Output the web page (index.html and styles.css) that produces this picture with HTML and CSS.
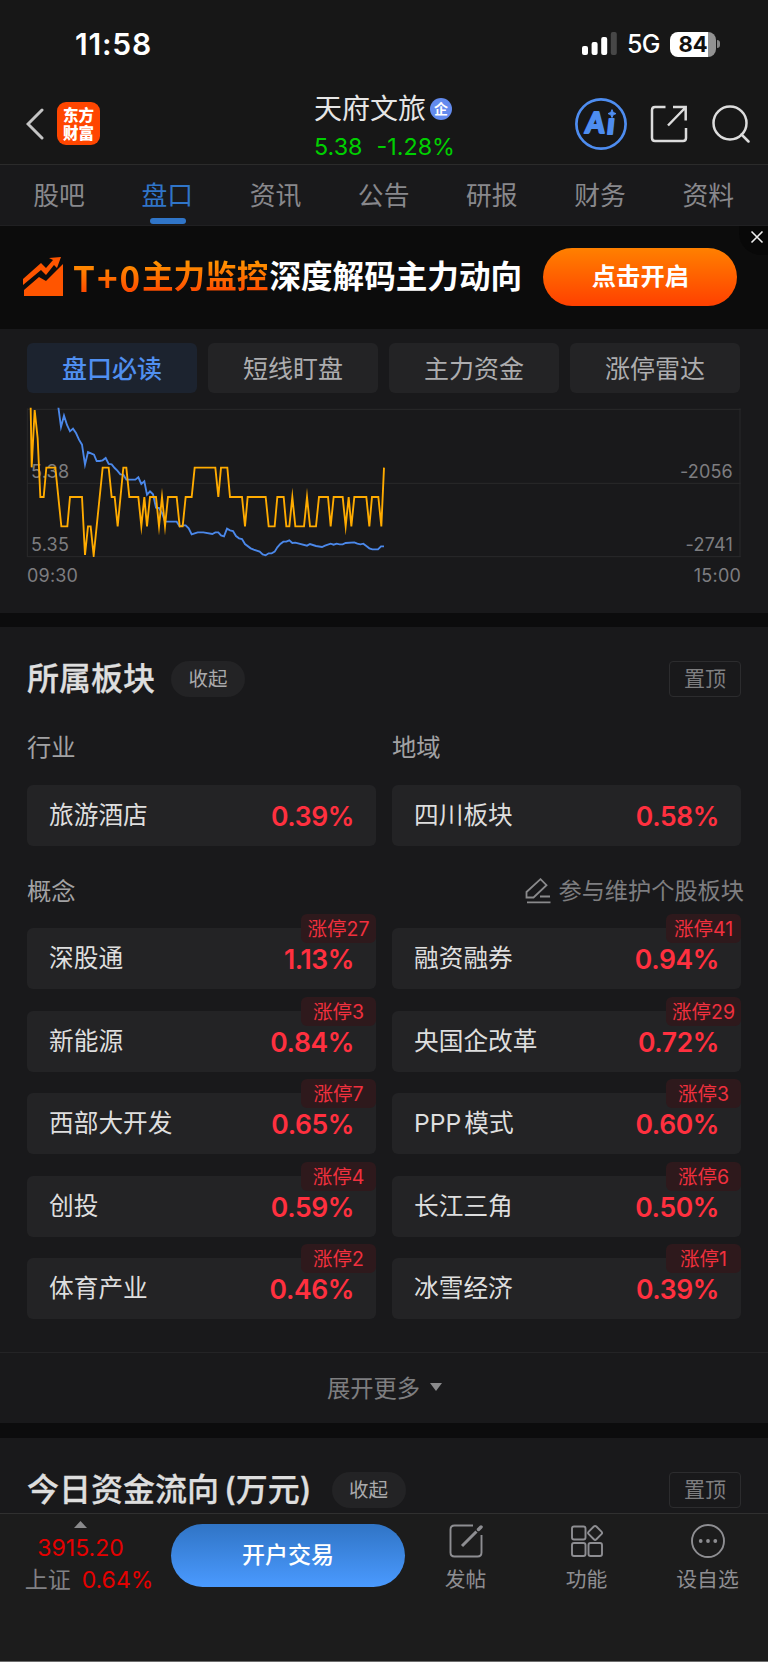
FILE: index.html
```html
<!DOCTYPE html>
<html lang="zh-CN">
<head>
<meta charset="utf-8">
<title>天府文旅</title>
<link rel="stylesheet" href="styles.css">
</head>
<body>
<div class="app">
  <div class="status">
    <span class="time">11:58</span>
    <div class="status-right">
      <svg class="signal" width="36" height="24" viewBox="0 0 36 24"><g fill="#fff"><rect x="0" y="14" width="6" height="9" rx="2"/><rect x="9.6" y="10" width="6" height="13" rx="2"/><rect x="19.2" y="5" width="6" height="18" rx="2"/></g><rect x="28.8" y="0" width="6" height="23" rx="2" fill="#474747"/></svg>
      <span class="net">5G</span>
      <div class="battery"><span>84</span></div>
      <i class="battery-tip"></i>
    </div>
  </div>

  <header class="header">
    <div class="header-left">
      <svg width="18" height="32" viewBox="0 0 18 32"><path d="M16 2 2 16 16 30" fill="none" stroke="#c4c4c4" stroke-width="3" stroke-linecap="round"/></svg>
      <div class="logo">东方<br>财富</div>
    </div>
    <div class="stock">
      <div class="stock-name">天府文旅<span class="corp">企</span></div>
      <div class="stock-quote"><span>5.38</span><span>-1.28%</span></div>
    </div>
    <div class="header-right">
      <svg width="52" height="52" viewBox="0 0 52 52"><circle cx="26" cy="26" r="24.6" fill="none" stroke="#4e8df0" stroke-width="2.7"/><g transform="translate(3.500 0) skewX(-6)"><text class="ai-text" x="10" y="35" textLength="19" lengthAdjust="spacingAndGlyphs">A</text><text class="ai-text" x="31.500" y="36">ı</text></g><path d="M37 11.600l1.200 2.800 2.800 1.200-2.800 1.200-1.200 2.800-1.200-2.800-2.800-1.200 2.800-1.200z" fill="#4e8df0" stroke="#4e8df0" stroke-width="1"/></svg>
      <svg width="38" height="38" viewBox="0 0 38 38" fill="none" stroke="#dcdcdc" stroke-width="2.500"><path d="M15.500 2H5Q2 2 2 5v28q0 3 3 3h28q3 0 3-3V23M23 2h12.700v13.500M35 3 18 20.500"/></svg>
      <svg width="38" height="38" viewBox="0 0 38 38" fill="none" stroke="#dcdcdc" stroke-width="2.500" stroke-linecap="round"><circle cx="18" cy="18" r="16.500"/><path d="m29.500 29.500 7 7"/></svg>
    </div>
  </header>

  <nav class="tabs">
    <a>股吧</a><a class="on">盘口</a><a>资讯</a><a>公告</a><a>研报</a><a>财务</a><a>资料</a>
  </nav>

  <div class="banner">
    <svg class="banner-icon" width="41" height="40" viewBox="0 0 41 40" fill="#ff5500"><path d="M0 22 18 6l5 5 7-8-4-2L38 0l-4 11-3-3-8 10-5-5L0 28z"/><path d="M1 39V33L16 20l7 4L40 7v32z"/></svg>
    <span class="banner-hot"><span class="t0">T+0</span>主力监控</span><span class="banner-text">深度解码主力动向</span>
    <a class="banner-btn">点击开启</a>
    <span class="banner-close"><svg width="14" height="14" viewBox="0 0 14 14"><path d="m1.500 1.500 11 11m0-11-11 11" stroke="#eee" stroke-width="1.600"/></svg></span>
  </div>

  <section class="chart-section">
    <div class="chips"><a class="on">盘口必读</a><a>短线盯盘</a><a>主力资金</a><a>涨停雷达</a></div>
    <div class="chart">
      <svg width="768" height="163" viewBox="0 0 2304 489">
        <g fill="none" stroke="#29292b" stroke-width="3"><path d="M82 43H2222M82 265H2222M82 485H2222M82 40V486M2220 40V486"/></g>
        <g class="axis">
          <text x="93" y="249">5.38</text><text x="93" y="469">5.35</text>
          <text x="2199" y="249" text-anchor="end">-2056</text><text x="2199" y="469" text-anchor="end">-2741</text>
        </g>
        <clipPath id="plot"><rect x="82" y="38" width="2140" height="448"/></clipPath>
        <g fill="none" stroke-width="5.600" stroke-miterlimit="10" clip-path="url(#plot)">
          <polyline stroke="#4b88ea" points="175,36 183,96 192,62 201,90 210,109 219,101 228,114 237,134 246,149 255,209 264,171 273,175 282,179 290,198 299,198 308,196 317,189 326,207 335,208 344,219 352,227 361,238 370,239 379,254 406,254 415,247 424,267 433,259 441,299 450,289 459,298 468,338 477,339 486,354 495,379 504,380 530,380 539,394 548,391 557,391 566,400 575,418 584,415 593,412 610,412 637,417 646,412 655,412 663,421 672,424 681,401 690,406 699,408 708,423 717,430 726,432 735,447 752,460 761,464 779,470 788,478 797,481 806,475 815,475 824,470 832,457 841,447 850,440 859,440 868,436 877,444 886,443 921,452 930,447 948,453 966,456 975,452 992,446 1001,449 1010,446 1019,448 1028,448 1037,444 1063,442 1072,446 1081,448 1090,446 1099,453 1108,460 1117,463 1134,463 1143,454 1152,454"/>
          <polyline stroke="#ffab00" points="92,36 95,217 104,45 113,130 121,306 131,306 139,218 166,218 184,394 202,394 210,306 246,306 255,480 264,394 272,394 281,482 308,218 326,218 335,306 344,306 353,394 370,218 379,218 388,306 415,306 424,394 433,306 441,394 450,306 468,306 477,394 486,306 495,394 504,306 530,306 539,394 548,394 557,306 575,306 584,218 646,218 655,306 663,218 682,218 690,306 726,306 735,394 743,306 797,306 806,394 824,394 832,306 851,306 859,394 868,394 877,306 886,394 912,394 921,306 930,394 948,394 957,306 984,306 992,394 1001,306 1028,306 1037,394 1046,306 1054,394 1063,306 1099,306 1108,394 1116,306 1135,306 1144,394 1152,218"/>
        </g>
      </svg>
      <div class="times"><span>09:30</span><span>15:00</span></div>
    </div>
  </section>

  <section class="plates">
    <div class="title-row"><h2>所属板块</h2><a class="fold">收起</a><a class="pin">置顶</a></div>
    <div class="pair labels"><span>行业</span><span>地域</span></div>
    <div class="pair">
      <div class="card"><span>旅游酒店</span><b>0.39%</b></div>
      <div class="card"><span>四川板块</span><b>0.58%</b></div>
    </div>
    <div class="concept-head"><span>概念</span>
      <a><svg width="26" height="26" viewBox="0 0 26 26" fill="none" stroke="#8a8a8c" stroke-width="1.800"><path d="M1.500 19.500V14L15.500 1.200l6 6L8.500 19.500zM15 18.500h10M2 24.300h23.500"/></svg>参与维护个股板块</a>
    </div>
    <div class="pair concepts">
      <div class="card"><span>深股通</span><b>1.13%</b><em>涨停27</em></div>
      <div class="card"><span>融资融券</span><b>0.94%</b><em>涨停41</em></div>
      <div class="card"><span>新能源</span><b>0.84%</b><em>涨停3</em></div>
      <div class="card"><span>央国企改革</span><b>0.72%</b><em>涨停29</em></div>
      <div class="card"><span>西部大开发</span><b>0.65%</b><em>涨停7</em></div>
      <div class="card"><span><span class="latin">PPP</span>模式</span><b>0.60%</b><em>涨停3</em></div>
      <div class="card"><span>创投</span><b>0.59%</b><em>涨停4</em></div>
      <div class="card"><span>长江三角</span><b>0.50%</b><em>涨停6</em></div>
      <div class="card"><span>体育产业</span><b>0.46%</b><em>涨停2</em></div>
      <div class="card"><span>冰雪经济</span><b>0.39%</b><em>涨停1</em></div>
    </div>
    <div class="more">展开更多<svg width="12" height="8" viewBox="0 0 12 8"><path d="M0 0h12L6 8z" fill="#8a8a8c"/></svg></div>
  </section>

  <section class="flow">
    <div class="title-row"><h2>今日资金流向<span class="paren">(</span>万元<span>)</span></h2><a class="fold">收起</a><a class="pin">置顶</a></div>
  </section>

  <footer class="bottom">
    <div class="index">
      <svg width="13" height="7" viewBox="0 0 13 7"><path d="M0 7h13L6.500 0z" fill="#8a8a8c"/></svg>
      <span class="num">3915.20</span>
      <div class="index-row"><span>上证</span><span class="num">0.64%</span></div>
    </div>
    <a class="trade">开户交易</a>
    <div class="actions">
      <a><svg width="34" height="34" viewBox="0 0 34 34" fill="none" stroke="#8e8e92" stroke-width="1.900"><path d="M24 1.500H5.500q-4 0-4 4v23q0 4 4 4h23q4 0 4-4V11"/><path d="m13 22 14.500-14.500" stroke-width="3"/><path d="m29.500 5.500 2.500-2.500" stroke-width="3.500" stroke-linecap="round"/></svg>发帖</a>
      <a><svg width="34" height="34" viewBox="0 0 34 34" fill="none" stroke="#8e8e92" stroke-width="1.900"><rect x="2" y="2.500" width="13.500" height="13" rx="2"/><rect x="2" y="19" width="13.500" height="13" rx="2"/><rect x="18.500" y="19" width="13.500" height="13" rx="2"/><rect x="19.700" y="3.500" width="10.800" height="10.800" rx="1.800" transform="rotate(45 25.100 8.900)"/></svg>功能</a>
      <a><svg width="34" height="34" viewBox="0 0 34 34"><circle cx="17" cy="17" r="16" fill="none" stroke="#8e8e92" stroke-width="1.900"/><g fill="#8e8e92"><circle cx="9.700" cy="17" r="1.900"/><circle cx="17" cy="17" r="1.900"/><circle cx="24.300" cy="17" r="1.900"/></g></svg>设自选</a>
    </div>
  </footer>
</div>
</body>
</html>
```
FILE: styles.css
```css
* { box-sizing: border-box; }
body {
  margin: 0;
  background: #0c0c0d;
  font-family: Inter, "Noto Sans CJK SC", sans-serif;
  font-weight: 400;
}
.app {
  width: 768px;
  height: 1662px;
  display: flex;
  flex-direction: column;
  overflow: hidden;
}
.app > * { flex: none; }
svg { display: block; flex: none; }

.status {
  height: 84px;
  background: #171717;
  display: flex;
  justify-content: space-between;
  padding: 0 48px 0 75px;
  color: #fff;
}
.time { font-size: 30px; font-weight: 600; line-height: 88px; letter-spacing: 0.8px; }
.status-right { display: flex; align-items: center; height: 88px; }
.net { font-size: 25px; font-weight: 500; margin-left: 9px; width: 43px; letter-spacing: -0.8px; line-height: 90px; }
.battery {
  width: 46px;
  height: 25px;
  border-radius: 8px;
  background: linear-gradient(90deg, #fff 38px, #929292 38px);
  color: #111;
  font-size: 22px;
  font-weight: 700;
  line-height: 25px;
  text-align: center;
}
.battery-tip { width: 3px; height: 8px; margin-left: 1px; border-radius: 0 4px 4px 0; background: #858585; }

.header {
  height: 81px;
  background: #171717;
  border-bottom: 1px solid #2b2b2b;
  display: grid;
  grid-template-columns: 240px 1fr 240px;
}
.header-left { display: flex; align-items: center; padding-left: 26px; gap: 13px; height: 79px; }
.logo {
  width: 43px;
  height: 43px;
  padding-top: 3px;
  border-radius: 9px;
  background: #ff4600;
  color: #fff;
  text-align: center;
  font: 900 15.5px/18px "Noto Sans CJK SC", sans-serif;
}
.stock { text-align: center; }
.stock-name {
  height: 46px;
  padding: 4px 2px 0 0;
  display: flex;
  align-items: center;
  justify-content: center;
  gap: 4px;
  color: #e6e6e6;
  font-size: 28px;
  line-height: 50px;
}
.corp {
  width: 22px;
  height: 22px;
  border-radius: 50%;
  background: #638bee;
  color: #fff;
  font-size: 14px;
  font-weight: 700;
  line-height: 21px;
}
.stock-quote { display: flex; justify-content: center; gap: 14px; color: #00d000; font-size: 23.3px; line-height: 34px; padding-left: 1px; }
.header-right { display: flex; align-items: center; height: 80px; padding-left: 47px; gap: 23px; }
.header-right svg:nth-child(2) { margin-right: 1px; }
.ai-text { font: 900 29px Lato, sans-serif; fill: #4e8df0; stroke: #4e8df0; stroke-width: 2; stroke-linejoin: round; }

.tabs {
  height: 61px;
  background: #19191b;
  display: grid;
  grid-template-columns: repeat(7, 108.2px);
  padding-left: 5px;
  border-bottom: 1px solid #202022;
}
.tabs a {
  position: relative;
  text-align: center;
  color: #88888c;
  font-size: 25.8px;
  line-height: 62px;
}
.tabs .on { color: #3075c8; }
.tabs .on::after {
  content: "";
  position: absolute;
  left: 37px;
  bottom: 3px;
  width: 36px;
  height: 6px;
  border-radius: 3px;
  background: #3075c8;
}

.banner {
  position: relative;
  height: 103px;
  background: #0c0c0c;
  display: flex;
  align-items: center;
  padding: 0 0 2px 23px;
  font-weight: 700;
  font-size: 31.6px;
}
.banner-icon { margin-right: 9px; }
.banner-hot {
  display: flex;
  line-height: 46px;
  background: linear-gradient(#ff9000 20%, #ff4800 85%);
  -webkit-background-clip: text;
  background-clip: text;
  color: transparent;
}
.t0 { font-family: "Noto Sans CJK SC", sans-serif; font-size: 35px; width: 69px; letter-spacing: 2px; white-space: nowrap; }
.banner-text { color: #fff; line-height: 46px; margin-left: 1px; width: 274px; white-space: nowrap; }
.banner-btn {
  width: 194px;
  height: 58px;
  border-radius: 29px;
  background: linear-gradient(#ff8000, #ff4000);
  color: #fff;
  font-size: 24.3px;
  line-height: 56px;
  text-align: center;
}
.banner-close {
  position: absolute;
  right: 0;
  top: 0;
  width: 29px;
  height: 29px;
  padding: 4px 0 0 11px;
  background: #080808;
  border-radius: 0 0 0 22px;
}

.chart-section { height: 284px; background: #19191b; padding-top: 14px; }
.chips { display: grid; grid-template-columns: repeat(4, 170px); gap: 11px; padding-left: 27px; }
.chips a {
  height: 50px;
  border-radius: 6px;
  background: #232325;
  color: #adadaf;
  text-align: center;
  font-size: 25px;
  line-height: 52px;
}
.chips .on { background: #1c232f; color: #508ff0; font-weight: 500; }
.chart { margin-top: 2px; }
.axis { font-size: 54px; fill: #7d7d80; letter-spacing: 0.6px; }
.times { display: flex; justify-content: space-between; padding: 0 27px; font-size: 18px; line-height: 35px; color: #7d7d80; letter-spacing: 0.2px; }

.plates { height: 796px; margin-top: 14px; background: #19191b; }
.title-row { display: flex; align-items: center; height: 105px; padding: 0 27px 1px; }
h2 { margin: 0; font-size: 32px; font-weight: 500; color: #dedede; line-height: 50px; -webkit-text-stroke: 0.3px #dedede; }
.paren { margin-left: 5px; }
.fold {
  width: 74px;
  height: 36px;
  margin-left: 16px;
  border-radius: 18px;
  background: #232325;
  color: #aaaaac;
  font-size: 19.5px;
  line-height: 36px;
  text-align: center;
}
.pin {
  width: 72px;
  height: 36px;
  margin-left: auto;
  border: 1px solid #2c2c2e;
  border-radius: 4px;
  color: #7e7e80;
  font-size: 21px;
  line-height: 34px;
  text-align: center;
}
.pair { display: grid; grid-template-columns: 349px 349px; gap: 16px; padding-left: 27px; }
.labels { height: 53px; font-size: 24.3px; line-height: 31px; color: #a2a2a4; }
.card {
  position: relative;
  height: 61px;
  border-radius: 6px;
  background: #232325;
  display: flex;
  align-items: center;
  justify-content: space-between;
  padding: 0 22px;
  font-size: 24.7px;
  line-height: 36px;
  color: #dedede;
}
.card > span { margin-top: -1px; }
.latin { margin-right: 3px; }
.card b { margin-top: 1px; color: #ff303f; font-size: 26.5px; font-weight: 600; letter-spacing: -0.4px; }
.card em {
  position: absolute;
  right: 0;
  top: -14px;
  width: 75px;
  height: 29px;
  border-radius: 6px;
  background: #2e191c;
  color: #f0303e;
  font-style: normal;
  font-size: 19.5px;
  line-height: 30px;
  text-align: center;
}
.concept-head { height: 82px; padding: 29px 24px 0 27px; display: flex; justify-content: space-between; align-items: flex-start; font-size: 24.3px; line-height: 32px; color: #a2a2a4; }
.concept-head a { display: flex; align-items: center; gap: 8px; font-size: 23.2px; color: #7e7e80; }
.concepts { grid-auto-rows: 61px; row-gap: 21.5px; }
.more {
  height: 71px;
  margin-top: 33px;
  padding: 0 0 2px 1px;
  border-top: 1px solid #242426;
  display: flex;
  align-items: center;
  justify-content: center;
  gap: 10px;
  font-size: 23.3px;
  color: #7e7e80;
}

.flow { height: 75px; margin-top: 15px; background: #19191b; overflow: hidden; }
.flow .fold { margin-left: 20px; }

.bottom {
  height: 149px;
  background: #1c1c1c;
  border-top: 1px solid #303030;
  border-bottom: 1px solid #6c6c6c;
  display: flex;
  align-items: flex-start;
}
.index { width: 171px; padding: 7px 10px 0 0; display: flex; flex-direction: column; align-items: center; font-size: 23px; color: #808084; }
.index .num { color: #e60000; }
.index > .num { margin-top: 4px; line-height: 32px; }
.index-row { display: flex; gap: 11px; line-height: 32px; padding-left: 17px; }
.trade {
  width: 234px;
  height: 63px;
  margin-top: 10px;
  border-radius: 32px;
  background: linear-gradient(#3074c5, #4a9aff);
  color: #fff;
  text-align: center;
  font-size: 23px;
  font-weight: 500;
  line-height: 63px;
}
.actions { display: grid; grid-template-columns: 121px 121px 121px; }
.actions a { display: flex; flex-direction: column; align-items: center; padding-top: 10px; color: #8e8e92; font-size: 20.8px; line-height: 44px; }
```
